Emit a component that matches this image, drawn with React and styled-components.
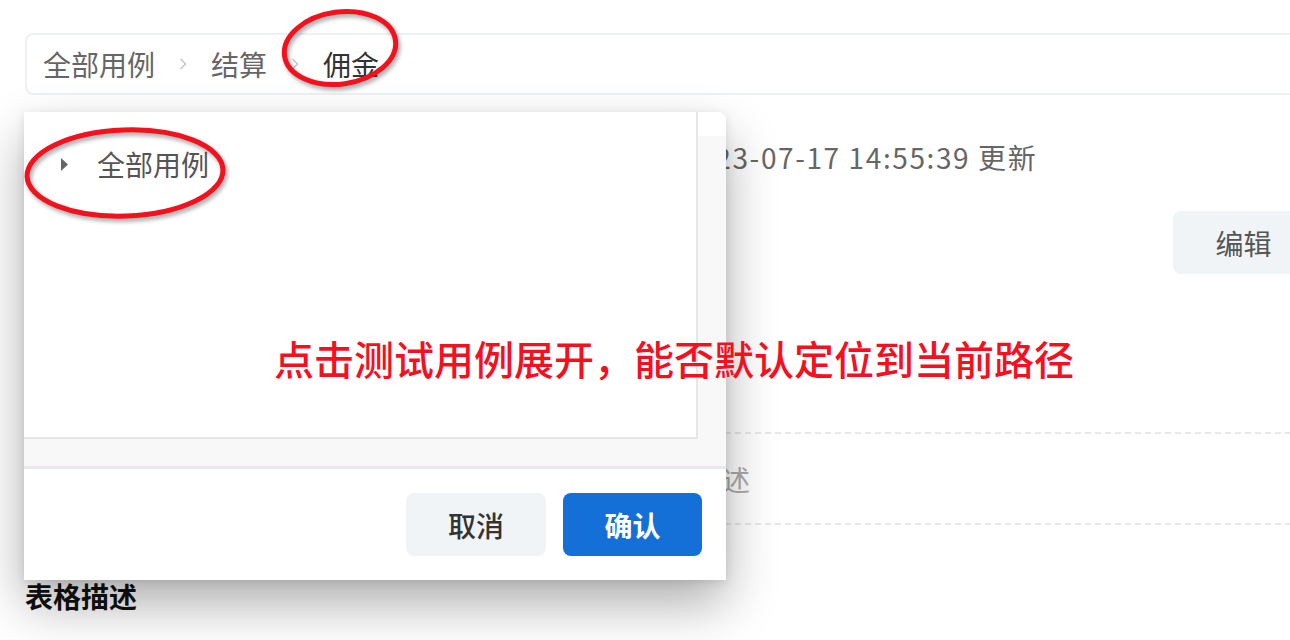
import React from 'react';
import styled, { createGlobalStyle } from 'styled-components';

const FONT = '"Noto Sans CJK SC", "Noto Sans", sans-serif';

const GlobalStyle = createGlobalStyle`
  html, body {
    margin: 0;
    padding: 0;
    background: #fff;
    overflow: hidden;
  }
  body {
    font-family: ${FONT};
  }
`;

const Page = styled.div`
  position: relative;
  box-sizing: border-box;
  width: 1314px;
  height: 640px;
  padding: 33px 0 0 25px;
  display: flex;
  flex-direction: column;
`;

const Breadcrumb = styled.div`
  height: 62px;
  box-sizing: border-box;
  border: 2px solid #eef1f4;
  border-radius: 8px;
  display: flex;
  align-items: center;
  gap: 24px;
  padding-left: 16px;
  font-size: 28px;
`;

const Crumb = styled.span`
  color: ${props => (props.current ? '#333' : '#666')};
  line-height: 1;
`;

const Chevron = () => (
  <svg width="8" height="16" viewBox="0 0 8 16">
    <path d="M1.5 3 L6.5 8 L1.5 13" fill="none" stroke="#c3c8cf" strokeWidth="1.6" />
  </svg>
);

const Meta = styled.div`
  margin-top: 42px;
  padding-left: 656px;
  height: 40px;
  line-height: 40px;
  font-size: 28px;
  letter-spacing: 1.6px;
  color: #666;
`;

const Toolbar = styled.div`
  margin-top: 34px;
  display: flex;
  justify-content: flex-end;
`;

const GhostButton = styled.button`
  width: ${props => props.width || 140}px;
  height: 63px;
  border: none;
  border-radius: 8px;
  background: #f1f4f7;
  color: ${props => (props.muted ? '#555' : '#333')};
  font-family: ${FONT};
  font-size: 28px;
  font-weight: ${props => (props.muted ? 400 : 500)};
  padding: 0;
`;

const PrimaryButton = styled(GhostButton)`
  background: #1470d6;
  color: #fff;
  font-weight: 600;
`;

const DescRow = styled.div`
  margin-top: 158px;
  height: 93px;
  display: flex;
  align-items: center;
  padding-left: 613px;
  font-size: 28px;
  color: #aaa;
  position: relative;

  &::before,
  &::after {
    content: '';
    position: absolute;
    left: 0;
    right: 0;
    height: 2px;
    background: repeating-linear-gradient(90deg, #e6e8eb 0 6px, transparent 6px 10px);
  }
  &::before { top: 0; }
  &::after { bottom: 0; }
`;

const SectionTitle = styled.div`
  margin-top: 53px;
  font-size: 28px;
  font-weight: 700;
  color: #111;
  line-height: 36px;
`;

/* dropdown tree panel lying over the page */
const Panel = styled.div`
  position: absolute;
  left: 24px;
  top: 112px;
  width: 702px;
  height: 468px;
  background: #fff;
  border-radius: 0 8px 0 0;
  box-shadow: 0 24px 52px rgba(0, 0, 0, 0.32), 0 2px 10px rgba(0, 0, 0, 0.1);
  display: flex;
  flex-direction: column;
  overflow: hidden;
`;

const PanelBody = styled.div`
  display: flex;
  height: 327px;
`;

const TreeBox = styled.div`
  flex: 1;
  box-sizing: border-box;
  border-right: 2px solid #e6e6e6;
  border-bottom: 2px solid #e6e6e6;
  padding-top: 28px;
`;

const RightGutter = styled.div`
  width: 28px;
  margin-top: 24px;
  background: #f8f8f8;
`;

const BottomGutter = styled.div`
  height: 27px;
  background: #f8f8f8;
  border-bottom: 3px solid #e8ebee;
`;

const TreeRow = styled.div`
  height: 48px;
  display: flex;
  align-items: center;
  padding-left: 37px;
  gap: 29px;
  font-size: 28px;
  color: #555;
`;

const Caret = () => (
  <svg width="7" height="13" viewBox="0 0 7 13">
    <path d="M0 0 L7 6.5 L0 13 Z" fill="#666" />
  </svg>
);

const Footer = styled.div`
  flex: 1;
  display: flex;
  justify-content: flex-end;
  align-items: center;
  gap: 17px;
  padding-right: 24px;
`;

/* annotation marks drawn on top of the screenshot */
const Mark = styled.svg`
  position: absolute;
  overflow: visible;
  filter: drop-shadow(2px 3px 2px rgba(0, 0, 0, 0.35));
`;

const Note = styled.div`
  position: absolute;
  left: 274px;
  top: 337px;
  font-size: 40px;
  line-height: 42px;
  font-weight: 500;
  color: #f5101f;
  white-space: nowrap;
`;

const Ellipse = ({ left, top, rx, ry, angle }) => (
  <Mark
    style={{ left, top }}
    width={rx * 2 + 10}
    height={ry * 2 + 10}
    viewBox={`0 0 ${rx * 2 + 10} ${ry * 2 + 10}`}
  >
    <ellipse
      cx={rx + 5}
      cy={ry + 5}
      rx={rx}
      ry={ry}
      fill="none"
      stroke="#f2111d"
      strokeWidth="5"
      transform={`rotate(${angle} ${rx + 5} ${ry + 5})`}
    />
  </Mark>
);

const App = () => (
  <>
    <GlobalStyle />
    <Page>
      <Breadcrumb>
        <Crumb>全部用例</Crumb>
        <Chevron />
        <Crumb>结算</Crumb>
        <Chevron />
        <Crumb current>佣金</Crumb>
      </Breadcrumb>

      <Meta>2023-07-17 14:55:39 更新</Meta>

      <Toolbar>
        <GhostButton muted width={141}>编辑</GhostButton>
      </Toolbar>

      <DescRow>暂无描述</DescRow>

      <SectionTitle>表格描述</SectionTitle>

      <Panel>
        <PanelBody>
          <TreeBox>
            <TreeRow>
              <Caret />
              <span>全部用例</span>
            </TreeRow>
          </TreeBox>
          <RightGutter />
        </PanelBody>
        <BottomGutter />
        <Footer>
          <GhostButton>取消</GhostButton>
          <PrimaryButton width={139}>确认</PrimaryButton>
        </Footer>
      </Panel>

      <Ellipse left={279} top={7} rx={56} ry={36} angle={-8} />
      <Ellipse left={22} top={125} rx={98} ry={43} angle={-2} />

      <Note>点击测试用例展开，能否默认定位到当前路径</Note>
    </Page>
  </>
);

export default App;
